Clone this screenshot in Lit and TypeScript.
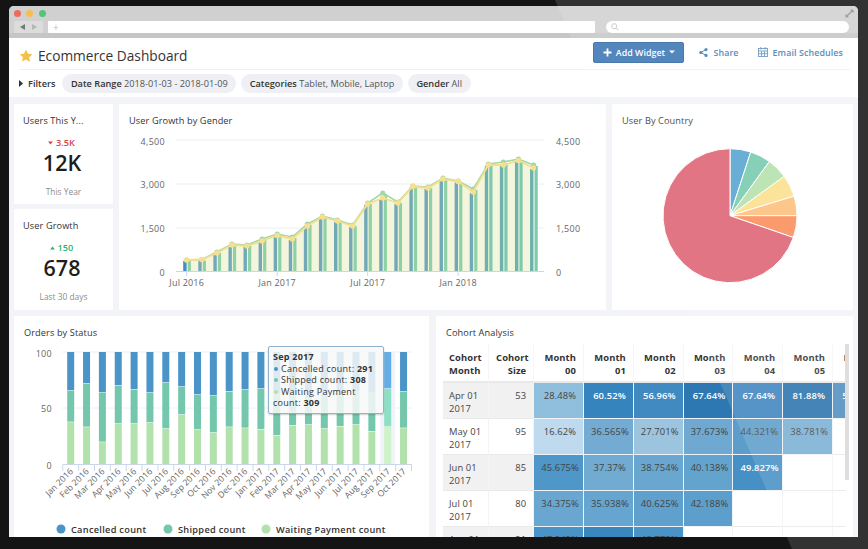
import { LitElement, html, css, svg } from "lit";
import { customElement } from "lit/decorators.js";

const GROWTH = [260,259.5,253,245,246,241,235.5,239,226,217,221,226,204,198,203,186.5,188,179,181.5,192,165,165,160.5,168];
const GROWTH_G = [260,259.5,252,244,245,239,234,237,224,216,220,225,203,193,202,186,187,178,181,189,164,162,159,165];
const gx = (i: number) => 186.7 + 15.08 * i;
const BASE = 271.5;

const ORDER_TOP = [226,204,232,210,222,232,202,214,238,241,228,223,220,236,232,228,234,232,230,233,220,228];
const ORDER_MID = [320,335,380,325,325,322,340,298,343,352,335,338,342,360,330,328,340,333,328,348,334,338];
const MONTHS = ["Jan 2016","Feb 2016","Mar 2016","Apr 2016","May 2016","Jun 2016","Jul 2016","Aug 2016","Sep 2016","Oct 2016","Nov 2016","Dec 2016","Jan 2017","Feb 2017","Mar 2017","Apr 2017","May 2017","Jun 2017","Jul 2017","Aug 2017","Sep 2017","Oct 2017"];
const ox = (i: number) => 70.7 + 15.85 * i;
const zy = (z: number) => 315 + z / 3;

/* The pie lies under the glass reflection, which lightens it to the reference's colours. */
const PIE = ["#54a2d0", "#76caae", "#b3e1aa", "#fbdf8b", "#fdbf7a", "#fb8b57", "#de6171"];
const pieAngles = [0, 18, 36, 54, 73, 90, 109, 360];

function arc(a0: number, a1: number) {
  const cx = 730, cy = 215.7, r = 67;
  const p = (a: number) => [cx + r * Math.sin((a * Math.PI) / 180), cy - r * Math.cos((a * Math.PI) / 180)];
  const [x0, y0] = p(a0);
  const [x1, y1] = p(a1);
  return `M${cx} ${cy}L${x0} ${y0}A${r} ${r} 0 ${a1 - a0 > 180 ? 1 : 0} 1 ${x1} ${y1}Z`;
}

type Cell = [string, string, boolean?];
const ROWS: { m: string; size: string; cells: Cell[] }[] = [
  { m: "Apr 01 2017", size: "53", cells: [["28.48%", "#8fbfdd"], ["60.52%", "#3684bd", true], ["56.96%", "#4089c1", true], ["67.64%", "#2d78b3", true], ["67.64%", "#3d85bf", true], ["81.88%", "#2a72ad", true], ["58.96%", "#4f8fc0", true]] },
  { m: "May 01 2017", size: "95", cells: [["16.62%", "#bfdaee"], ["36.565%", "#74abd2"], ["27.701%", "#9cc4df"], ["37.673%", "#6fa8d0"], ["44.321%", "#5c9dc9"], ["38.781%", "#7aafd4"]] },
  { m: "Jun 01 2017", size: "85", cells: [["45.675%", "#4f96c9"], ["37.37%", "#71abd2"], ["38.754%", "#6aa7d0"], ["40.138%", "#63a4cf"], ["49.827%", "#4790c5", true]] },
  { m: "Jul 01 2017", size: "80", cells: [["34.375%", "#6aa7d0"], ["35.938%", "#65a5cf"], ["40.625%", "#5fa0cc"], ["42.188%", "#5c9fcc"]] },
  { m: "Aug 01 2017", size: "91", cells: [["47.249%", "#4a93c6"], ["59.307%", "#3a87be", true], ["48.772%", "#4a93c6"]] },
];

@customElement("app-root")
export class AppRoot extends LitElement {
  static styles = css`
    :host { display: block; width: 868px; height: 549px; position: relative; overflow: hidden; background: #141414; font-family: "Open Sans", "Noto Sans", sans-serif; color: #333; }
    .window { position: absolute; inset: 6px 10px 12px 9px; background: #fff; border-radius: 5px 5px 0 0; overflow: hidden; display: flex; flex-direction: column; }
    .glass { position: absolute; inset: 0; background: rgba(255,255,255,.13); clip-path: polygon(555px 0, 868px 0, 868px 549px, 792px 549px); pointer-events: none; }
    .chrome { height: 32px; flex: none; background: #d0d0d0; border-bottom: 5px solid #c6c6c6; box-sizing: border-box; padding: 3px 9px 0 5px; position: relative; }
    .lights { display: flex; gap: 5.5px; height: 9px; margin-left: -0.5px; }
    .lights i { width: 7px; height: 7px; border-radius: 50%; margin-top: 1px; }
    .chrome-row { display: flex; margin-top: 3px; height: 12px; gap: 5px; }
    .nav { width: 29px; background: #dcdcdc; display: flex; align-items: center; justify-content: center; gap: 7px; border-radius: 1px; }
    .url { width: 547px; background: #fff; border-radius: 1px; color: #bbb; font-size: 10px; line-height: 12px; padding-left: 5px; box-sizing: border-box; }
    .search { margin-left: 6px; width: 243px; background: #fff; border-radius: 6px; display: flex; align-items: center; padding-left: 5px; box-sizing: border-box; }
    .resize { position: absolute; right: 4px; top: 3px; }
    .head { height: 32px; flex: none; margin: 0 8px 0 10px; border-bottom: 1px solid #f0f0f2; box-sizing: border-box; display: flex; align-items: center; }
    .title { font-size: 13.7px; margin-left: 5px; color: #333; flex: 1; padding-top: 3px; }
    .star { margin-top: 4px; }
    .btn { width: 91px; height: 21px; margin-top: -3px; box-sizing: border-box; background: #3a75b4; border: 1px solid #2f669e; border-radius: 2px; color: #fff; font-size: 8.9px; font-weight: 600; display: flex; align-items: center; justify-content: center; gap: 4px; margin-right: 15px; }
    .link { color: #3f7cb5; font-size: 8.9px; font-weight: 600; display: flex; align-items: center; gap: 5px; margin-top: -3px; letter-spacing: .1px; }
    .link.share { margin-right: 19px; }
    .link.mail { margin-right: 7px; }
    .filters { height: 27px; flex: none; padding: 0 0 0 10px; display: flex; align-items: center; gap: 5px; font-size: 9.2px; }
    .filters .lbl { font-weight: 600; display: flex; align-items: center; gap: 5px; margin-right: 2px; }
    .chip { background: #eef0f5; border-radius: 10px; height: 19px; line-height: 19px; padding: 0 8.5px; color: #555; white-space: nowrap; }
    .chip b { font-weight: 600; color: #333; }
    .dash { flex: 1; background: #f3f4f8; padding: 7px 5px 0; min-height: 0; overflow: hidden; }
    .top { display: grid; grid-template-columns: 99px 487px 241px; gap: 6px; height: 206px; }
    .stack { display: grid; grid-template-rows: 100px 101px; gap: 5px; }
    .card { background: #fff; overflow: hidden; position: relative; }
    .card h3 { margin: 0; font-size: 9.2px; font-weight: 500; line-height: 15px; padding: 9px 0 0 10px; color: #333; letter-spacing: .1px; }
    .stat { display: flex; flex-direction: column; align-items: center; }
    .stat h3 { align-self: flex-start; padding-left: 9px; }
    .delta { font-size: 9.2px; font-weight: 600; line-height: 12px; margin-top: 9px; padding-right: 4px; display: flex; align-items: center; gap: 3px; }
    .delta.down { color: #d8454a; }
    .delta.up { color: #2cb673; }
    .num { font-size: 21.5px; font-weight: 600; line-height: 27px; color: #1e1e1e; margin-top: 0; padding-right: 3px; }
    .sub { font-size: 8.4px; color: #8c8c8c; line-height: 12px; margin-top: 10px; }
    svg.chart { display: block; }
    svg text { font-family: "Open Sans", "Noto Sans", sans-serif; }
    .bottom { display: grid; grid-template-columns: 415px 417px; gap: 7px; margin-top: 6px; height: 240px; }
    .tip { position: absolute; left: 254px; top: 30px; width: 116px; height: 68px; box-sizing: border-box; background: rgba(247,248,248,.86); border: 1px solid #8fb3cc; border-radius: 2px; box-shadow: 0 1px 2px rgba(0,0,0,.2); padding: 4px 4px; font-size: 9px; line-height: 11.6px; color: #333; letter-spacing: .25px; white-space: nowrap; }
    .tip b { font-weight: 700; }
    .tip i { display: inline-block; width: 4px; height: 4px; border-radius: 50%; margin: 0 3px 1px 1px; }
    .tbl-wrap { margin: 3px 0 0 7px; display: flex; }
    .tbl-clip { width: 403px; overflow: hidden; height: 200px; }
    .scroll { width: 4px; height: 136px; background: #dadada; margin: 1px 0 0 -1px; border-radius: 1px; }
    table { border-collapse: separate; border-spacing: 0; table-layout: fixed; width: 440px; font-size: 9.4px; line-height: 13px; letter-spacing: .1px; color: #444; }
    col.a { width: 46px; } col.b { width: 45px; } col.m { width: 49.7px; }
    th { font-weight: 700; text-align: right; padding: 8px 7px 4px; height: 26px; vertical-align: top; border-bottom: 2px solid #e9e9e9; border-right: 1px solid #f6f6f6; color: #333; box-sizing: content-box; }
    th.l { text-align: left; padding-left: 6px; padding-right: 0; }
    td { text-align: right; padding: 6px 7px 3px; height: 26px; vertical-align: top; border-bottom: 1px solid #eaeaea; border-right: 1px solid #f4f4f4; box-sizing: content-box; white-space: nowrap; }
    td.l { text-align: left; padding-left: 6px; padding-right: 0; white-space: normal; }
    td.c { border-right-color: #eef4f9; border-bottom-color: #eef4f9; }
    td.w { color: #fff; font-weight: 600; }
    tr.odd td.l, tr.odd td.s { background: #f1f1f1; }
  `;

  private growthChart() {
    const pts = (a: number[]) => a.map((y, i) => `${gx(i)},${y}`).join(" ");
    const area = `${gx(0)},${BASE} ${pts(GROWTH)} ${gx(23)},${BASE}`;
    return html`<svg class="chart" width="487" height="182" viewBox="119 128 487 182">
      ${[140, 184, 228].map((y) => svg`<line x1="176" x2="544" y1=${y} y2=${y} stroke="#eceef2" stroke-width="1"/>`)}
      <polygon points=${area} fill="#f3f5dc"/>
      ${GROWTH.map((y, i) => svg`
        <rect x=${gx(i) - 3.5} y=${y + 1} width="3.4" height=${BASE - y - 1} fill=${i === 0 ? "#3f8fc4" : i > 19 ? "#6db2ad" : "#73a9b7"}/>
        <rect x=${gx(i) + 1} y=${GROWTH_G[i] + 1} width="3.2" height=${BASE - GROWTH_G[i] - 1} fill=${i > 19 ? "#7fc9ae" : "#8fd1a6"}/>`)}
      <line x1="176" x2="544" y1="271.5" y2="271.5" stroke="#ccd6eb"/>
      ${[0, 6, 12, 18].map((i) => svg`<line x1=${gx(i)} x2=${gx(i)} y1="271.5" y2="276" stroke="#ccd6eb"/>`)}
      <polyline points=${pts(GROWTH_G)} fill="none" stroke="#a5d6a7" stroke-width="1.6"/>
      ${GROWTH_G.map((y, i) => svg`<circle cx=${gx(i)} cy=${y} r="2.6" fill="#a5d6a7"/>`)}
      <polyline points=${pts(GROWTH)} fill="none" stroke="#f3de8c" stroke-width="1.8"/>
      ${GROWTH.map((y, i) => svg`<circle cx=${gx(i)} cy=${y} r="2.8" fill="#f6e08f"/>`)}
      ${[["4,500", 144.5], ["3,000", 188], ["1,500", 232], ["0", 275.5]].map(([t, y]) => svg`
        <text x="165" y=${y} text-anchor="end" font-size="9" fill="#666" letter-spacing=".3">${t}</text>
        <text x="556" y=${y} font-size="9" fill="#666" letter-spacing=".3">${t}</text>`)}
      ${[["Jul 2016", 0], ["Jan 2017", 6], ["Jul 2017", 12], ["Jan 2018", 18]].map(([t, i]) => svg`
        <text x=${gx(i as number)} y="286" text-anchor="middle" font-size="9" fill="#666" letter-spacing=".2">${t}</text>`)}
    </svg>`;
  }

  private pieChart() {
    return html`<svg class="chart" width="241" height="182" viewBox="612 128 241 182">
      ${PIE.map((c, i) => svg`<path d=${arc(pieAngles[i], pieAngles[i + 1])} fill=${c} stroke="#fff" stroke-width="1"/>`)}
    </svg>`;
  }

  private ordersChart() {
    return html`<svg class="chart" width="415" height="197" viewBox="14 340 415 197">
      ${[352, 408].map((y) => svg`<line x1="62" x2="412" y1=${y} y2=${y} stroke="#eef0f3"/>`)}
      <rect x=${ox(20) - 7.5} y="352" width="15" height="112.5" fill="#f0f3fa"/>
      ${MONTHS.map((_, i) => {
        const hi = i === 20;
        const x = ox(i) - 3.5;
        const a = zy(ORDER_TOP[i]), b = zy(ORDER_MID[i]);
        return svg`
          <rect x=${x} y="352" width="7" height=${a - 352} fill=${hi ? "#63aee6" : "#4b94c8"}/>
          <rect x=${x} y=${a + 0.5} width="7" height=${b - a - 0.5} fill=${hi ? "#8de0c6" : "#74c7ac"}/>
          <rect x=${x} y=${b + 0.5} width="7" height=${464.5 - b - 0.5} fill=${hi ? "#cdf3c8" : "#b2e2ac"}/>`;
      })}
      <line x1="63" x2="412" y1="464.5" y2="464.5" stroke="#ccd6eb"/>
      ${Array.from({ length: 23 }, (_, i) => svg`<line x1=${ox(i) - 7.9} x2=${ox(i) - 7.9} y1="464.5" y2="471" stroke="#ccd6eb"/>`)}
      ${MONTHS.map((m, i) => svg`<text transform="translate(${ox(i) + 3} 472) rotate(-45)" text-anchor="end" font-size="8.6" fill="#666" letter-spacing=".1">${m}</text>`)}
      ${[["100", 356.5], ["50", 412], ["0", 469]].map(([t, y]) => svg`<text x="52" y=${y} text-anchor="end" font-size="9" fill="#666" letter-spacing=".3">${t}</text>`)}
      <circle cx="61" cy="529" r="4.5" fill="#4b94c8"/>
      <text x="71" y="533" font-size="9.2" font-weight="600" fill="#333" letter-spacing=".3">Cancelled count</text>
      <circle cx="168" cy="529" r="4.5" fill="#74c7ac"/>
      <text x="178" y="533" font-size="9.2" font-weight="600" fill="#333" letter-spacing=".3">Shipped count</text>
      <circle cx="266" cy="529" r="4.5" fill="#b2e2ac"/>
      <text x="276" y="533" font-size="9.2" font-weight="600" fill="#333" letter-spacing=".3">Waiting Payment count</text>
    </svg>`;
  }

  private table() {
    const cols = ["00", "01", "02", "03", "04", "05", "06"];
    return html`<table>
      <colgroup><col class="a"/><col class="b"/>${cols.map(() => html`<col class="m"/>`)}</colgroup>
      <thead><tr>
        <th class="l">Cohort Month</th><th>Cohort Size</th>
        ${cols.map((c) => html`<th>Month ${c}</th>`)}
      </tr></thead>
      <tbody>
        ${ROWS.map((r, ri) => html`<tr class=${ri % 2 === 0 ? "odd" : ""}>
          <td class="l">${r.m}</td><td class="s">${r.size}</td>
          ${cols.map((_, i) => {
            const c = r.cells[i];
            return c
              ? html`<td class="c ${c[2] ? "w" : ""}" style="background:${c[1]}">${c[0]}</td>`
              : html`<td></td>`;
          })}
        </tr>`)}
      </tbody>
    </table>`;
  }

  render() {
    return html`
      <div class="window">
        <div class="chrome">
          <div class="lights"><i style="background:#ec6a5e"></i><i style="background:#f4bf4f"></i><i style="background:#4fc777"></i></div>
          <div class="chrome-row">
            <div class="nav">
              <svg width="5" height="6" viewBox="0 0 5 6"><path d="M5 0L0 3l5 3z" fill="#777"/></svg>
              <svg width="5" height="6" viewBox="0 0 5 6"><path d="M0 0l5 3-5 3z" fill="#b5b5b5"/></svg>
            </div>
            <div class="url">+</div>
            <div class="search">
              <svg width="8" height="8" viewBox="0 0 8 8" fill="none" stroke="#c4c4c4"><circle cx="3.2" cy="3.2" r="2.5"/><path d="M5 5l2.5 2.5"/></svg>
            </div>
          </div>
          <svg class="resize" width="9" height="9" viewBox="0 0 9 9"><path d="M1 8L8 1M1 8V5.5M1 8h2.5M8 1v2.5M8 1H5.5" stroke="#8f8f8f" stroke-width="1.2" fill="none"/></svg>
        </div>

        <div class="head">
          <svg class="star" width="14" height="14" viewBox="0 0 24 24"><path d="M12 1l3.4 7.2 7.6 1-5.6 5.4 1.4 7.8L12 18l-6.8 3.4 1.4-7.8L1 9.200l7.600-1z" fill="#f5c04a"/></svg>
          <div class="title">Ecommerce Dashboard</div>
          <div class="btn">
            <svg width="9" height="9" viewBox="0 0 9 9"><path d="M4.500 .5v8M.5 4.500h8" stroke="#fff" stroke-width="1.800"/></svg>
            <span>Add Widget</span>
            <svg width="6" height="4" viewBox="0 0 6 4"><path d="M0 .5h6L3 3.500z" fill="#fff"/></svg>
          </div>
          <div class="link share">
            <svg width="9" height="9" viewBox="0 0 9 9" fill="#3f7cb5"><circle cx="1.800" cy="4.500" r="1.600"/><circle cx="7" cy="1.600" r="1.600"/><circle cx="7" cy="7.400" r="1.600"/><path d="M1.800 4.500L7 1.600M1.800 4.500L7 7.400" stroke="#3f7cb5"/></svg>
            <span>Share</span>
          </div>
          <div class="link mail">
            <svg width="10" height="10" viewBox="0 0 10 10" fill="none" stroke="#5f8fbd" stroke-width=".9"><rect x=".5" y="1.500" width="9" height="8"/><path d="M.5 4h9M3.500 4v5.500M6.500 4v5.500M.5 6.700h9M2.800 0v2.500M7.200 0v2.500"/></svg>
            <span>Email Schedules</span>
          </div>
        </div>

        <div class="filters">
          <div class="lbl">
            <svg width="4" height="7" viewBox="0 0 4 7"><path d="M0 0l4 3.500L0 7z" fill="#333"/></svg>
            <span>Filters</span>
          </div>
          <div class="chip"><b>Date Range</b> 2018-01-03 - 2018-01-09</div>
          <div class="chip"><b>Categories</b> Tablet, Mobile, Laptop</div>
          <div class="chip"><b>Gender</b> All</div>
        </div>

        <div class="dash">
          <div class="top">
            <div class="stack">
              <div class="card stat">
                <h3>Users This Y...</h3>
                <div class="delta down"><svg width="5" height="4" viewBox="0 0 5 4"><path d="M0 .5h5L2.500 3.500z" fill="#d8454a"/></svg><span>3.5K</span></div>
                <div class="num">12K</div>
                <div class="sub">This Year</div>
              </div>
              <div class="card stat">
                <h3>User Growth</h3>
                <div class="delta up"><svg width="5" height="4" viewBox="0 0 5 4"><path d="M0 3.500h5L2.500 .5z" fill="#2cb673"/></svg><span>150</span></div>
                <div class="num">678</div>
                <div class="sub">Last 30 days</div>
              </div>
            </div>
            <div class="card"><h3>User Growth by Gender</h3>${this.growthChart()}</div>
            <div class="card"><h3>User By Country</h3>${this.pieChart()}</div>
          </div>
          <div class="bottom">
            <div class="card">
              <h3>Orders by Status</h3>
              ${this.ordersChart()}
              <div class="tip">
                <b>Sep 2017</b><br/>
                <i style="background:#4b94c8"></i>Cancelled count: <b>291</b><br/>
                <i style="background:#74c7ac"></i>Shipped count: <b>308</b><br/>
                <i style="background:#b2e2ac"></i>Waiting Payment<br/>count: <b>309</b>
              </div>
            </div>
            <div class="card">
              <h3>Cohort Analysis</h3>
              <div class="tbl-wrap">
                <div class="tbl-clip">${this.table()}</div>
                <div class="scroll"></div>
              </div>
            </div>
          </div>
        </div>
      </div>
      <div class="glass"></div>
    `;
  }
}
